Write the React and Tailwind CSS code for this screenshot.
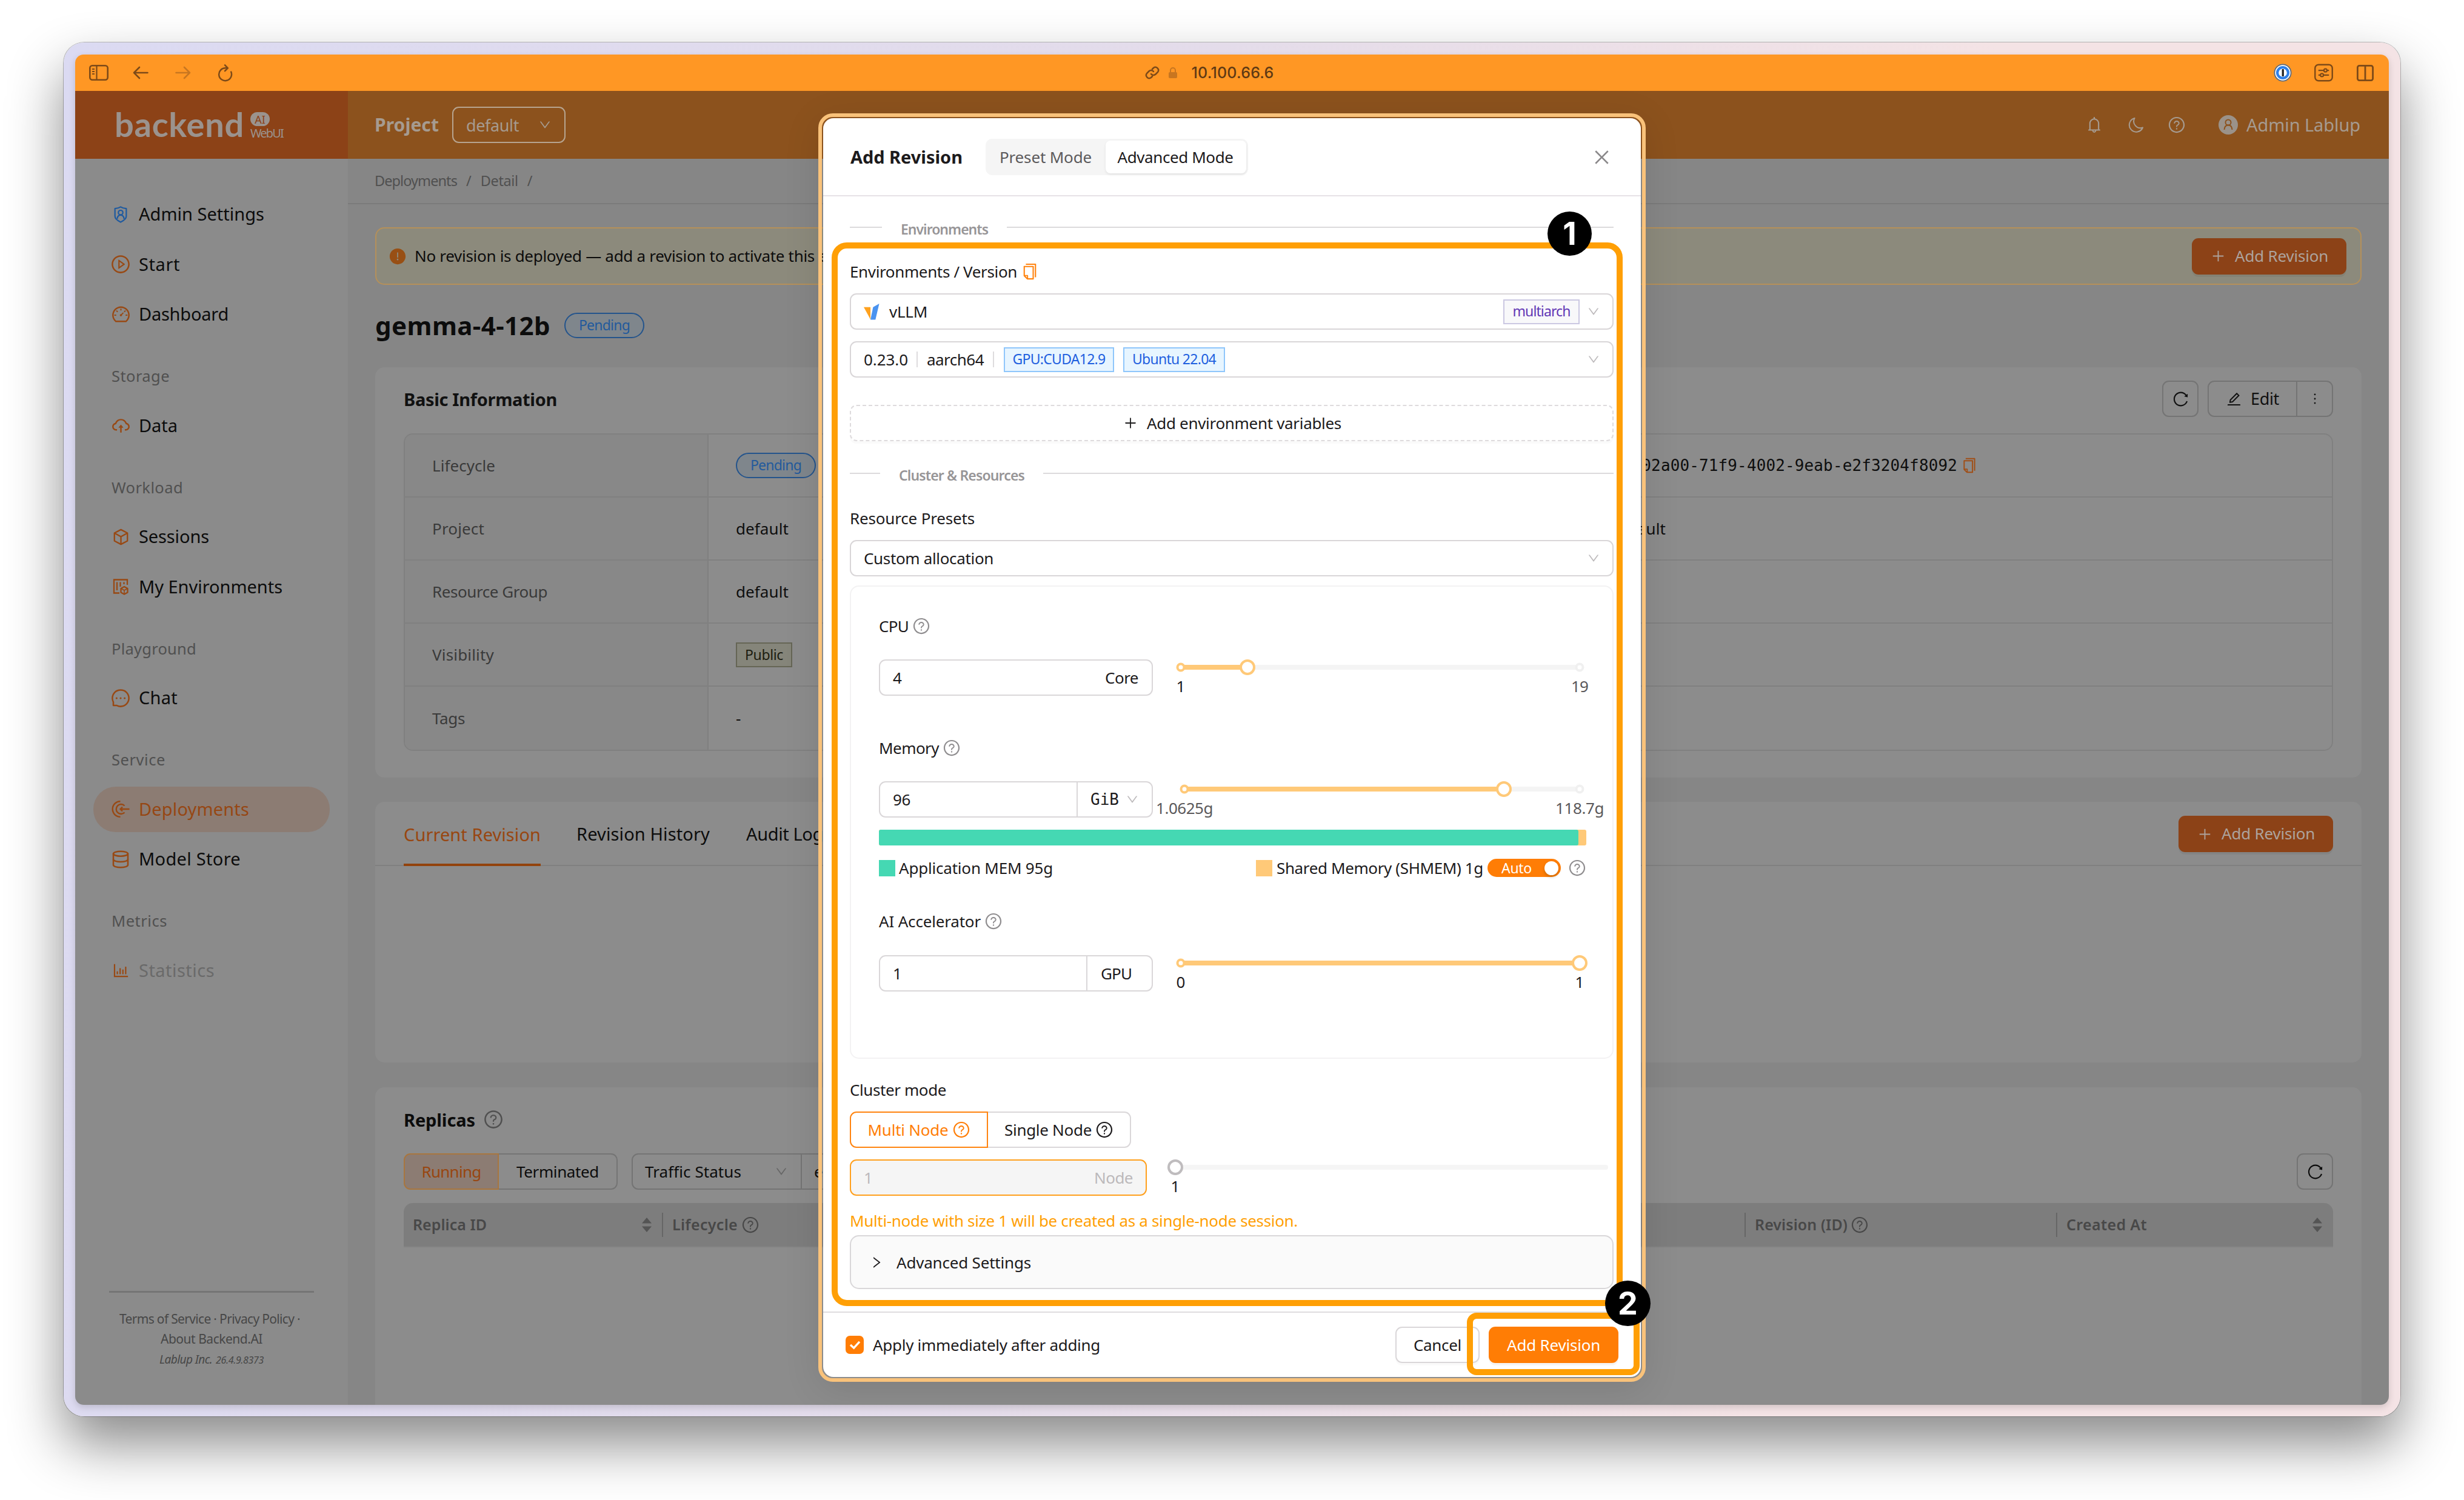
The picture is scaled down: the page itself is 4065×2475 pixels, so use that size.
import { useLayoutEffect, useRef } from "react";
import {
  AiFillExclamationCircle,
  AiOutlineBarChart,
  AiOutlineBell,
  AiOutlineClose,
  AiOutlineCloudUpload,
  AiOutlineCopy,
  AiOutlineDashboard,
  AiOutlineDown,
  AiOutlineEdit,
  AiOutlineMessage,
  AiOutlineMore,
  AiOutlinePlayCircle,
  AiOutlinePlus,
  AiOutlineQuestionCircle,
  AiOutlineReload,
  AiOutlineRight,
} from "react-icons/ai";
import { Database } from "lucide-react";
import clsx from "clsx";

/* Single-line label that spreads its letters to the given width. */
function Fit({ w, className, children }) {
  const ref = useRef(null);
  useLayoutEffect(() => {
    const el = ref.current;
    el.style.letterSpacing = "0px";
    const natural = el.getBoundingClientRect().width;
    el.style.letterSpacing = (w - natural) / el.textContent.length + "px";
  }, [w, children]);
  return (
    <span ref={ref} className={clsx("inline-block shrink-0 whitespace-pre leading-none", className)}>
      {children}
    </span>
  );
}

/* ---------- drawings ---------- */

function ShieldUser() {
  return (
    <svg viewBox="0 0 24 30" className="h-[28px] w-[24px]" fill="none" stroke="#1f5a9f" strokeWidth="2.4" strokeLinejoin="round">
      <path d="M12 1.5C9 3.5 6 4.200 2 4.500V18c0 5 5 8 10 10.500C17 26 22 23 22 18V4.500C18 4.200 15 3.500 12 1.500Z" />
      <circle cx="12" cy="11.500" r="4" />
      <path d="M6 22.500c.5-4.500 3-6.500 6-6.500s5.500 2 6 6.500" />
    </svg>
  );
}

function Cube() {
  return (
    <svg viewBox="0 0 28 30" className="h-[28px] w-[27px]" fill="none" stroke="currentColor" strokeWidth="2.500" strokeLinejoin="round">
      <path d="M14 2 25.500 8v14L14 28 2.500 22V8Z" />
      <path d="M2.500 8 14 14.500 25.500 8M14 14.500V28" />
    </svg>
  );
}

function EnvIcon() {
  return (
    <svg viewBox="0 0 28 28" className="h-[28px] w-[28px]" fill="none" stroke="currentColor" strokeWidth="2.300">
      <path d="M25 11V2.500H3V24.500H12" />
      <path d="M8 6.500V20M13.500 6.500V14M19.500 6.500V10" />
      <path d="M20 14 25.500 17v6.500L20 26.500 14.500 23.500V17Z" strokeLinejoin="round" />
      <path d="M14.500 17 20 20 25.500 17M20 20V26.500" strokeWidth="1.600" />
    </svg>
  );
}

function DeployIcon() {
  return (
    <svg viewBox="0 0 30 30" className="h-[30px] w-[30px]" fill="none" stroke="currentColor" strokeWidth="2.400">
      <path d="M14.500 2.200A12.800 12.800 0 0 0 14.500 27.800" />
      <path d="M21.500 9.500A8 8 0 1 0 21.500 20.500" />
      <path d="M29.500 15H14.500M18 11.500 14.500 15l3.500 3.500" />
    </svg>
  );
}

function Moon() {
  return (
    <svg viewBox="0 0 26 26" className="h-[26px] w-[26px]" fill="none" stroke="currentColor" strokeWidth="2" strokeLinejoin="round">
      <path d="M10.500 2A11.500 11.500 0 1 0 24 17.500 11 11 0 0 1 10.500 2Z" />
    </svg>
  );
}

function Avatar() {
  return (
    <svg viewBox="0 0 32 32" className="h-[32px] w-[32px]">
      <circle cx="16" cy="16" r="16" fill="#9b9289" />
      <g fill="none" stroke="#8c521d" strokeWidth="2">
        <circle cx="16" cy="12" r="4.500" />
        <path d="M9.500 24c.3-5 3-7.500 6.500-7.500s6.200 2.500 6.500 7.500" />
      </g>
    </svg>
  );
}

function Sorter() {
  return (
    <svg viewBox="0 0 16 24" className="h-[24px] w-[16px]" fill="#545454">
      <path d="M8 0 16 9.500H0ZM8 24 16 14.500H0Z" />
    </svg>
  );
}

function VllmMark() {
  return (
    <svg viewBox="0 0 27 28" className="h-[27px] w-[26px]">
      <path d="M0 6H11.500V27Z" fill="#ffa21f" />
      <path d="M16 6 26.500 0 20 27.500H11.500Z" fill="#4a93f0" />
    </svg>
  );
}

function Help({ className }) {
  return <AiOutlineQuestionCircle className={clsx("h-[30px] w-[30px] shrink-0", className)} />;
}

/* ---------- browser bar ---------- */

function BrowserBar() {
  return (
    <div className="grid h-[60px] shrink-0 grid-cols-3 items-center bg-[#ff9724] text-[#7d4a18]">
      <div className="flex items-center pl-[23px]">
        <svg viewBox="0 0 32 26" className="h-[26px] w-[32px]" fill="none" stroke="currentColor" strokeWidth="2.600">
          <rect x="1.300" y="1.300" width="29.400" height="23.400" rx="4" />
          <path d="M12.500 1.500V24.500M5 7h4M5 11h4M5 15h4" strokeWidth="2.200" />
        </svg>
        <svg viewBox="0 0 26 22" className="ml-[40px] h-[22px] w-[26px]" fill="none" stroke="currentColor" strokeWidth="2.600" strokeLinecap="round" strokeLinejoin="round">
          <path d="M24.500 11H2M11 2 2 11l9 9" />
        </svg>
        <svg viewBox="0 0 26 22" className="ml-[44px] h-[22px] w-[26px] text-[#c87620]" fill="none" stroke="currentColor" strokeWidth="2.600" strokeLinecap="round" strokeLinejoin="round">
          <path d="M1.500 11H24M15 2l9 9-9 9" />
        </svg>
        <svg viewBox="0 0 26 30" className="ml-[44px] h-[29px] w-[26px]" fill="none" stroke="currentColor" strokeWidth="2.600" strokeLinecap="round" strokeLinejoin="round">
          <path d="M22.500 13A10.800 10.800 0 1 1 13 6.500h3" />
          <path d="M12 1.500 17 6.500 12 11.500" />
        </svg>
      </div>
      <div className="flex items-center justify-center pr-[74px]">
        <svg viewBox="0 0 24 24" className="h-[24px] w-[24px]" fill="none" stroke="currentColor" strokeWidth="2.500" strokeLinecap="round">
          <path d="M10 14a5 5 0 0 0 7.500.5l3.500-3.500a5 5 0 0 0-7-7l-2 2" />
          <path d="M14 10a5 5 0 0 0-7.500-.5L3 13a5 5 0 0 0 7 7l2-2" />
        </svg>
        <svg viewBox="0 0 16 20" className="ml-[14px] h-[20px] w-[16px] text-[#c87620]">
          <rect x="1" y="9" width="14" height="10" rx="2" fill="currentColor" />
          <path d="M4 9V6a4 4 0 0 1 8 0v3" fill="none" stroke="currentColor" strokeWidth="2" />
        </svg>
        <Fit w={136} className="ml-[22px] font-[Inter,sans-serif] text-[25px] font-medium text-[#5f3a14]">10.100.66.6</Fit>
      </div>
      <div className="flex items-center justify-end pr-[25px]">
        <svg viewBox="0 0 32 32" className="h-[30px] w-[30px]">
          <circle cx="16" cy="16" r="14.500" fill="#fff" stroke="#5b6b80" strokeWidth="2" />
          <circle cx="16" cy="16" r="9.500" fill="#fff" stroke="#2f80ea" strokeWidth="4.500" />
          <rect x="14.500" y="9.500" width="3.500" height="13" rx="1" fill="#222" />
        </svg>
        <svg viewBox="0 0 32 30" className="ml-[37px] h-[30px] w-[31px]" fill="none" stroke="currentColor" strokeWidth="2.500">
          <rect x="1.300" y="1.300" width="29.400" height="27.400" rx="6" />
          <path d="M7 11h9M22 11h3M7 19h3M16 19h9" strokeWidth="2.200" />
          <circle cx="19" cy="11" r="2.600" strokeWidth="2.200" />
          <circle cx="13" cy="19" r="2.600" strokeWidth="2.200" />
        </svg>
        <svg viewBox="0 0 28 27" className="ml-[39px] h-[27px] w-[28px]" fill="none" stroke="currentColor" strokeWidth="2.800">
          <rect x="1.400" y="1.400" width="25.200" height="24.200" rx="3" />
          <path d="M14 1.400V25.600" />
        </svg>
      </div>
    </div>
  );
}

/* ---------- side menu ---------- */

function Item({ icon, w, active, muted, children, last }) {
  return (
    <div
      className={clsx(
        "mx-[30px] flex h-[75px] items-center rounded-[37px] text-[29px]",
        active ? "bg-[#8c7c73] text-[#964714]" : muted ? "text-[#6a6a6a]" : "text-[#0c0c0c]",
        !last && "mb-[7.500px]",
      )}
    >
      <span className="ml-[28px] flex w-[34px] justify-center text-[#984914]">{icon}</span>
      <Fit w={w} className="-mt-[2px] ml-[13px]">{children}</Fit>
    </div>
  );
}

function Group({ w, children }) {
  return (
    <div className="flex h-[108.500px] pl-[60px] pt-[52px] text-[25.500px] text-[#505050]">
      <Fit w={w}>{children}</Fit>
    </div>
  );
}

function Sider() {
  return (
    <div className="flex w-[450px] shrink-0 flex-col bg-[#8b8b8b]">
      <div className="flex h-[112px] shrink-0 items-center bg-[#8c4217] pl-[65px] text-[#9b938e]">
        <Fit w={214} className="-mt-[3px] font-[Lato,sans-serif] text-[56px] font-bold">backend</Fit>
        <div className="ml-[10px] mt-[3px] flex flex-col">
          <span className="flex h-[23px] w-[32px] items-center justify-center rounded-full bg-[#9b938e] text-[18px] leading-none text-[#8c4217]">AI</span>
          <Fit w={54} className="mt-[2px] text-[20px]">WebUI</Fit>
        </div>
      </div>
      <div className="pt-[54px]">
        <Item icon={<ShieldUser />} w={207}>Admin Settings</Item>
        <Item icon={<AiOutlinePlayCircle className="size-[34px]" />} w={68}>Start</Item>
        <Item last icon={<AiOutlineDashboard className="size-[33px]" />} w={148}>Dashboard</Item>
        <Group w={96}>Storage</Group>
        <Item last icon={<AiOutlineCloudUpload className="size-[33px]" />} w={64}>Data</Item>
        <Group w={118}>Workload</Group>
        <Item icon={<Cube />} w={116}>Sessions</Item>
        <Item last icon={<EnvIcon />} w={237}>My Environments</Item>
        <Group w={140}>Playground</Group>
        <Item last icon={<AiOutlineMessage className="size-[34px]" />} w={64}>Chat</Item>
        <Group w={89}>Service</Group>
        <Item active icon={<DeployIcon />} w={182}>Deployments</Item>
        <Item last icon={<Database className="size-[32px]" strokeWidth={1.900} />} w={168}>Model Store</Item>
        <Group w={92}>Metrics</Group>
        <Item muted last icon={<AiOutlineBarChart className="size-[31px]" />} w={125}>Statistics</Item>
      </div>
      <div className="mx-[56px] mt-auto flex h-[188px] flex-col items-center border-t-[3px] border-[#757575] text-[#474747]">
        <Fit w={298} className="mt-[33px] -ml-[6px] text-[21px]">Terms of Service · Privacy Policy ·</Fit>
        <Fit w={168} className="mt-[12px] text-[21px]">About Backend.AI</Fit>
        <div className="mt-[14px] flex items-baseline italic">
          <Fit w={87} className="text-[19px]">Lablup Inc.</Fit>
          <Fit w={79} className="ml-[6px] text-[16px]">26.4.9.8373</Fit>
        </div>
      </div>
    </div>
  );
}

/* ---------- page behind the dialog ---------- */

function PageHeader() {
  return (
    <div className="flex h-[112px] shrink-0 items-center bg-[#8c521d] pl-[44px] pr-[47px] text-[#a69b90]">
      <Fit w={106} className="text-[30px] font-bold">Project</Fit>
      <div className="ml-[22px] flex h-[60px] w-[187px] items-center rounded-[11px] border-2 border-[#b7a48f] pl-[21px]">
        <Fit w={87} className="text-[27px]">default</Fit>
        <AiOutlineDown className="ml-[32px] size-[22px]" />
      </div>
      <div className="ml-auto flex items-center">
        <AiOutlineBell className="size-[30px]" />
        <span className="ml-[41px]"><Moon /></span>
        <Help className="ml-[39px]" />
        <span className="ml-[54px]"><Avatar /></span>
        <Fit w={188} className="-mt-[2px] ml-[14px] text-[29px]">Admin Lablup</Fit>
      </div>
    </div>
  );
}

function DimButton() {
  return (
    <div className="flex h-[60px] w-[255px] items-center rounded-[11px] bg-[#8c4217] text-[#ada39d] shadow-[0_4px_0_rgba(0,0,0,0.05)]">
      <AiOutlinePlus className="ml-[31px] size-[25px]" />
      <Fit w={154} className="-mt-[2px] ml-[15px] text-[26px]">Add Revision</Fit>
    </div>
  );
}

function DimPill() {
  return (
    <div className="flex h-[42px] w-[132px] items-center justify-center rounded-full border-2 border-[#24548c] bg-[#7f868c] text-[#235a9c]">
      <Fit w={84} className="-mt-[1px] text-[23px]">Pending</Fit>
    </div>
  );
}

function InfoRow({ label, w, value, right, last }) {
  return (
    <div className={clsx("flex h-[104px]", !last && "border-b-2 border-[#808080]")}>
      <div className="flex w-[501px] shrink-0 items-center border-r-2 border-[#808080] bg-[#888] pl-[45px] text-[#3a3a3a]">
        <Fit w={w}>{label}</Fit>
      </div>
      <div className="flex w-[947px] shrink-0 items-center pl-[45px] text-[#0e0e0e]">{value}</div>
      <div className="w-[500px] shrink-0 border-x-2 border-[#808080] bg-[#888]" />
      <div className="flex items-center pl-[45px] text-[#0e0e0e]">{right}</div>
    </div>
  );
}

function Page() {
  return (
    <div className="flex min-w-0 flex-1 flex-col bg-[#868686]">
      <PageHeader />
      <div className="flex h-[75px] shrink-0 items-center gap-[15px] border-b-2 border-[#7b7b7b] pl-[44px] text-[23.500px] text-[#505050]">
        <Fit w={136}>Deployments</Fit>
        <span className="leading-none">/</span>
        <Fit w={62}>Detail</Fit>
        <span className="leading-none">/</span>
      </div>
      <div className="flex min-h-0 flex-1 flex-col pl-[45px] pr-[45px] pt-[38px]">
        <div className="flex h-[95px] shrink-0 items-center rounded-[15px] border-2 border-[#b5905a] bg-[#8c8a7c] pl-[20px] pr-[23px]">
          <AiFillExclamationCircle className="size-[30px] text-[#984f14]" />
          <Fit w={660} className="-mt-[2px] ml-[13px] text-[26px] text-[#0c0c0c]">No revision is deployed — add a revision to activate this</Fit>
          <Fit w={112} className="-mt-[2px] ml-[7px] text-[26px] text-[#0c0c0c]">endpoint.</Fit>
          <div className="ml-auto"><DimButton /></div>
        </div>
        <div className="mt-[38px] flex h-[60px] shrink-0 items-center">
          <Fit w={289} className="-mt-[3px] text-[42px] font-bold text-[#0c0c0c]">gemma-4-12b</Fit>
          <div className="-mt-[3px] ml-[23px]"><DimPill /></div>
        </div>

        <div className="mt-[38px] h-[677px] shrink-0 rounded-[15px] bg-[#8c8c8c] px-[47px] pt-[22px]">
          <div className="flex h-[60px] items-center text-[#111]">
            <Fit w={253} className="text-[29px] font-bold">Basic Information</Fit>
            <div className="ml-auto flex h-[60px] w-[60px] items-center justify-center rounded-[11px] border-2 border-[#747474]">
              <AiOutlineReload className="size-[29px]" />
            </div>
            <div className="ml-[15px] flex h-[60px] w-[207px] items-center rounded-[11px] border-2 border-[#747474]">
              <AiOutlineEdit className="ml-[28px] size-[27px]" />
              <Fit w={47} className="-mt-[1px] ml-[14px] text-[27px]">Edit</Fit>
              <div className="ml-auto flex h-full w-[59px] items-center justify-center border-l-2 border-[#747474]">
                <AiOutlineMore className="size-[26px]" />
              </div>
            </div>
          </div>
          <div className="mt-[27px] overflow-hidden rounded-[15px] border-2 border-[#808080] text-[26px]">
            <InfoRow
              label="Lifecycle"
              w={104}
              value={<DimPill />}
              right={
                <>
                  <Fit w={568} className="font-['DejaVu_Sans_Mono',monospace] text-[26px]">01902a00-71f9-4002-9eab-e2f3204f8092</Fit>
                  <AiOutlineCopy className="ml-[6px] size-[28px] text-[#a04e16]" />
                </>
              }
            />
            <InfoRow label="Project" w={86} value={<Fit w={87}>default</Fit>} right={<Fit w={87}>default</Fit>} />
            <InfoRow label="Resource Group" w={190} value={<Fit w={87}>default</Fit>} />
            <InfoRow
              label="Visibility"
              w={102}
              value={
                <div className="flex h-[41px] w-[93px] items-center justify-center border-2 border-[#656555] bg-[#85857a] text-[#1c1c10]">
                  <Fit w={63} className="text-[23px]">Public</Fit>
                </div>
              }
            />
            <InfoRow label="Tags" w={54} value="-" last />
          </div>
        </div>

        <div className="mt-[40px] h-[430px] shrink-0 rounded-[15px] bg-[#8c8c8c]">
          <div className="flex h-[106px] border-b-2 border-[#808080] px-[47px] text-[29px] text-[#0c0c0c]">
            <div className="-mb-[2px] flex items-center border-b-4 border-[#93430d] pt-[5px] text-[#984610]">
              <Fit w={226}>Current Revision</Fit>
            </div>
            <div className="ml-[59px] flex items-center pt-[1px]"><Fit w={220}>Revision History</Fit></div>
            <div className="ml-[60px] flex items-center pt-[1px]"><Fit w={127}>Audit Log</Fit></div>
            <div className="ml-auto pt-[23px]"><DimButton /></div>
          </div>
        </div>

        <div className="mt-[41px] flex-1 rounded-t-[15px] bg-[#8c8c8c] px-[47px] pt-[33px] text-[#0c0c0c]">
          <div className="flex h-[40px] items-center">
            <Fit w={118} className="text-[29px] font-bold">Replicas</Fit>
            <Help className="ml-[13px] h-[34px] w-[34px] text-[#505050]" />
          </div>
          <div className="mt-[36px] flex h-[60px] text-[26px]">
            <div className="flex w-[157px] items-center justify-center rounded-l-[11px] border-2 border-[#a8763f] bg-[#8c7c73] text-[#984610]">
              <Fit w={98}>Running</Fit>
            </div>
            <div className="flex w-[196px] items-center justify-center rounded-r-[11px] border-2 border-l-0 border-[#747474]">
              <Fit w={136}>Terminated</Fit>
            </div>
            <div className="ml-[23px] flex w-[281px] items-center rounded-l-[11px] border-2 border-[#747474] pl-[20px]">
              <Fit w={159}>Traffic Status</Fit>
              <AiOutlineDown className="ml-auto mr-[21px] size-[22px] text-[#666]" />
            </div>
            <div className="flex w-[400px] items-center rounded-r-[11px] border-2 border-l-0 border-[#747474] pl-[20px]">
              <Fit w={80}>equals</Fit>
            </div>
            <div className="ml-auto flex w-[60px] items-center justify-center rounded-[11px] border-2 border-[#747474]">
              <AiOutlineReload className="size-[29px]" />
            </div>
          </div>
          <div className="mt-[22px] flex h-[73px] items-center rounded-t-[15px] border-b-2 border-[#828282] bg-[#7d7d7d] text-[25px] font-semibold text-[#484848]">
            <div className="flex h-[40px] w-[428px] items-center border-r-2 border-[#666] pl-[15px] pr-[17px]">
              <Fit w={122}>Replica ID</Fit>
              <span className="ml-auto"><Sorter /></span>
            </div>
            <div className="flex h-[40px] w-[1786px] items-center border-r-2 border-[#666] pl-[15px]">
              <Fit w={108}>Lifecycle</Fit>
              <Help className="ml-[6px]" />
            </div>
            <div className="flex h-[40px] w-[514px] items-center border-r-2 border-[#666] pl-[15px]">
              <Fit w={153}>Revision (ID)</Fit>
              <Help className="ml-[5px]" />
            </div>
            <div className="flex h-[40px] flex-1 items-center pl-[15px] pr-[18px]">
              <Fit w={133}>Created At</Fit>
              <span className="ml-auto"><Sorter /></span>
            </div>
          </div>
        </div>
      </div>
    </div>
  );
}

/* ---------- dialog ---------- */

function Section({ line, w, children }) {
  return (
    <div className="flex h-[40px] items-center">
      <div className={clsx("mb-[5px] h-[2px] bg-[#dcdadc]", line)} />
      <Fit w={w} className="mx-[31px] mt-[2px] text-[23px] font-semibold text-[#979597]">{children}</Fit>
      <div className="mb-[5px] h-[2px] flex-1 bg-[#dcdadc]" />
    </div>
  );
}

function Label({ w, help, children }) {
  return (
    <div className="flex h-[40px] items-center">
      <Fit w={w}>{children}</Fit>
      {help && <Help className="ml-[6px] text-[#8f8d8f]" />}
    </div>
  );
}

function Select({ className, children }) {
  return (
    <div className={clsx("flex h-[60px] items-center rounded-[11px] border-2 border-[#d9d6d8] bg-white pl-[21px] pr-[20px]", className)}>
      {children}
      <AiOutlineDown className="size-[22px] shrink-0 text-[#bdbabc]" />
    </div>
  );
}

function Tag({ className, w, children }) {
  return (
    <div className={clsx("flex h-[41px] items-center justify-center border-2 text-[23px]", className)}>
      <Fit w={w} className="-mt-[2px]">{children}</Fit>
    </div>
  );
}

function Slider({ className, value, min, max, tone = "text-[#1c1a1c]", maxTone = "text-[#5a585a]" }) {
  return (
    <div className={clsx("relative mt-[9px] h-[7.500px] rounded-full bg-[#f4f4f4]", className)}>
      <div className="h-full rounded-full bg-[#ffc978]" style={{ width: `${value}%` }} />
      <span className="absolute left-0 top-1/2 size-[15px] -translate-x-1/2 -translate-y-1/2 rounded-full border-4 border-[#ffc978] bg-white" />
      <span className="absolute left-full top-1/2 size-[15px] -translate-x-1/2 -translate-y-1/2 rounded-full border-4 border-[#f0f0f0] bg-white" />
      <span
        className="absolute top-1/2 size-[26px] -translate-x-1/2 -translate-y-1/2 rounded-full border-4 border-[#ffc978] bg-white"
        style={{ left: `${value}%` }}
      />
      <span className={clsx("absolute left-0 top-[22px] -translate-x-1/2 leading-none", tone)}>{min}</span>
      <span className={clsx("absolute left-full top-[22px] -translate-x-1/2 leading-none", maxTone)}>{max}</span>
    </div>
  );
}

function Badge({ className, children }) {
  return (
    <div className={clsx("absolute flex items-center justify-center rounded-full bg-black font-[Inter,sans-serif] text-[52px] font-bold leading-none text-white", className)}>
      {children}
    </div>
  );
}

function Resources() {
  const box = "flex h-[60px] w-[452px] shrink-0 items-center rounded-[11px] border-2 border-[#dad7d9] pl-[21px]";
  return (
    <div className="mt-[15px] h-[781px] rounded-[15px] border-2 border-[#f3f2f3] pl-[46px] pr-[44px] pt-[45px]">
      <Label w={49} help>CPU</Label>
      <div className="mt-[35px] flex">
        <div className={box}>
          <span className="leading-none">4</span>
          <Fit w={55} className="ml-auto mr-[22px]">Core</Fit>
        </div>
        <Slider className="ml-[46px] w-[658px]" value={16.700} min="1" max={<Fit w={28}>19</Fit>} />
      </div>

      <div className="mt-[66px]"><Label w={99} help>Memory</Label></div>
      <div className="mt-[35px] flex">
        <div className={box}>
          <Fit w={29}>96</Fit>
          <div className="ml-auto flex h-full w-[124px] items-center border-l-2 border-[#dad7d9] pl-[21px]">
            <Fit w={47} className="font-['DejaVu_Sans_Mono',monospace]">GiB</Fit>
            <AiOutlineDown className="ml-[11px] size-[22px] text-[#bdbabc]" />
          </div>
        </div>
        <Slider className="ml-[52px] w-[652px]" value={80.800} min={<Fit w={94}>1.0625g</Fit>} max={<Fit w={80}>118.7g</Fit>} tone="text-[#5a585a]" />
      </div>
      <div className="mt-[20px] flex h-[26px] w-[1167px] overflow-hidden rounded-[3px] bg-[#ffc978]">
        <div className="w-[1154px] rounded-r-[3px] bg-[#45d8b3]" />
      </div>
      <div className="mt-[17px] flex h-[40px] w-[1167px] items-center">
        <span className="size-[27px] bg-[#45d8b3]" />
        <Fit w={254} className="ml-[6px]">Application MEM 95g</Fit>
        <span className="ml-auto size-[27px] bg-[#ffc978]" />
        <Fit w={341} className="ml-[7px]">Shared Memory (SHMEM) 1g</Fit>
        <div className="ml-[7px] flex h-[30px] w-[121px] items-center rounded-full bg-[#ff7d05] pl-[23px] pr-[4px] text-white">
          <Fit w={50} className="text-[23px]">Auto</Fit>
          <span className="ml-auto size-[23px] rounded-full bg-white shadow-[0_3px_5px_rgba(0,35,11,0.2)]" />
        </div>
        <Help className="ml-[12px] text-[#8f8d8f]" />
      </div>

      <div className="mt-[48px]"><Label w={168} help>AI Accelerator</Label></div>
      <div className="mt-[36px] flex">
        <div className={box}>
          <span className="leading-none">1</span>
          <div className="ml-auto flex h-full w-[108px] items-center border-l-2 border-[#dad7d9] pl-[22px]">
            <Fit w={51}>GPU</Fit>
          </div>
        </div>
        <Slider className="ml-[46px] w-[658px]" value={100} min="0" max="1" maxTone="text-[#1c1a1c]" />
      </div>
    </div>
  );
}

function Dialog() {
  return (
    <div className="absolute left-[1226px] top-[97px] h-[2093px] w-[1365px] rounded-[24px] border-[6px] border-[#f9c27a] p-[2px] shadow-[0_12px_60px_rgba(0,0,0,0.1)]">
      <div className="relative flex h-full flex-col rounded-[17px] bg-white text-[26px] text-[#1c1a1c]">
        <div className="flex h-[129px] shrink-0 items-center border-b-2 border-[#e6e2e6] pl-[45px] pr-[48px]">
          <Fit w={185} className="text-[29px] font-bold">Add Revision</Fit>
          <div className="ml-[38px] flex h-[60px] w-[433px] items-center rounded-[11px] bg-[#f5f5f5] p-[3px]">
            <Fit w={152} className="ml-[20px] text-[#5c5a5c]">Preset Mode</Fit>
            <div className="ml-auto flex h-[54px] w-[232px] items-center justify-center rounded-[8px] bg-white pr-[2px] shadow-[0_2px_4px_rgba(0,0,0,0.08)]">
              <Fit w={191}>Advanced Mode</Fit>
            </div>
          </div>
          <AiOutlineClose className="ml-auto mt-[1px] size-[33px] text-[#8a888a]" />
        </div>

        <div className="flex flex-1 flex-col pl-[44px] pr-[45px] pt-[33px]">
          <Section line="w-[53px]" w={144}>Environments</Section>
          <div className="mt-[31px] flex h-[40px] items-center">
            <Fit w={276}>Environments / Version</Fit>
            <AiOutlineCopy className="ml-[6px] size-[30px] text-[#ff8410]" />
          </div>
          <Select className="mt-[16px]">
            <VllmMark />
            <Fit w={63} className="ml-[16px]">vLLM</Fit>
            <Tag w={95} className="ml-auto mr-[12px] w-[126px] border-[#cbc8e2] bg-[#f8f8fa] text-[#6237b5]">multiarch</Tag>
          </Select>
          <Select className="mt-[19px]">
            <Fit w={73}>0.23.0</Fit>
            <span className="ml-[14px] h-[26px] w-[2px] bg-[#dedcde]" />
            <Fit w={94} className="ml-[15px]">aarch64</Fit>
            <span className="ml-[15px] h-[26px] w-[2px] bg-[#dedcde]" />
            <Tag w={153} className="ml-[16px] w-[182px] border-[#8fc6fb] bg-[#e7f5ff] text-[#1f60df]">GPU:CUDA12.9</Tag>
            <Tag w={138} className="ml-[15px] mr-auto w-[168px] border-[#8fc6fb] bg-[#e7f5ff] text-[#1f60df]">Ubuntu 22.04</Tag>
          </Select>
          <div className="mt-[45px] flex h-[60px] items-center justify-center rounded-[11px] border-2 border-dashed border-[#dedbdd] pl-[2px] shadow-[0_4px_0_rgba(0,0,0,0.02)]">
            <AiOutlinePlus className="size-[24px]" />
            <Fit w={321} className="ml-[15px]">Add environment variables</Fit>
          </div>
          <div className="mt-[35px]"><Section line="w-[50px]" w={207}>{"Cluster & Resources"}</Section></div>
          <div className="mt-[32px]"><Label w={206}>Resource Presets</Label></div>
          <Select className="mt-[16px]">
            <Fit w={214} className="mr-auto">Custom allocation</Fit>
          </Select>
          <Resources />
          <div className="mt-[31px]"><Label w={159}>Cluster mode</Label></div>
          <div className="mt-[16px] flex h-[60px]">
            <div className="flex w-[228px] items-center justify-center rounded-l-[11px] border-2 border-[#ff8410] text-[#ff7d05]">
              <Fit w={133}>Multi Node</Fit>
              <Help className="ml-[6px]" />
            </div>
            <div className="flex w-[236px] items-center justify-center rounded-r-[11px] border-2 border-l-0 border-[#dad7d9]">
              <Fit w={144}>Single Node</Fit>
              <Help className="ml-[6px]" />
            </div>
          </div>
          <div className="mt-[19px] flex">
            <div className="flex h-[60px] w-[490px] items-center rounded-[11px] border-2 border-[#ffa01e] bg-[#f5f5f5] px-[21px] text-[#bcb9bb]">
              <span className="leading-none">1</span>
              <Fit w={64} className="ml-auto">Node</Fit>
            </div>
            <div className="relative ml-[47px] mt-[9px] h-[7.500px] w-[714px] rounded-full bg-[#f5f5f5]">
              <span className="absolute left-0 top-1/2 size-[26px] -translate-x-1/2 -translate-y-1/2 rounded-full border-4 border-[#bfbcbe] bg-white" />
              <span className="absolute left-0 top-[22px] -translate-x-1/2 leading-none">1</span>
            </div>
          </div>
          <div className="mt-[21px] flex h-[40px] items-center text-[#ff9f05]">
            <Fit w={739}>Multi-node with size 1 will be created as a single-node session.</Fit>
          </div>
          <div className="mt-[4px] flex h-[89px] items-center rounded-[15px] border-2 border-[#d9d7d9] bg-[#fafafa] pl-[30px]">
            <AiOutlineRight className="size-[24px]" />
            <Fit w={222} className="ml-[21px]">Advanced Settings</Fit>
          </div>
        </div>

        <div className="flex h-[108px] shrink-0 items-center border-t-2 border-[#dfdddf] pl-[37px] pr-[37px]">
          <span className="flex size-[30px] items-center justify-center rounded-[7px] bg-[#ff7d05]">
            <svg viewBox="0 0 20 16" className="h-[15px] w-[19px]" fill="none" stroke="#fff" strokeWidth="3.600">
              <path d="M2 7.500 8 13 18 2" />
            </svg>
          </span>
          <Fit w={375} className="ml-[15px]">Apply immediately after adding</Fit>
          <div className="ml-auto flex h-[60px] w-[139px] items-center justify-center rounded-[11px] border-2 border-[#dad7d9] shadow-[0_4px_0_rgba(0,0,0,0.02)]">
            <Fit w={79}>Cancel</Fit>
          </div>
          <div className="ml-[15px] flex h-[60px] w-[214px] items-center justify-center rounded-[11px] bg-[#ff7d05] text-white shadow-[0_4px_0_rgba(0,0,0,0.04)]">
            <Fit w={154}>Add Revision</Fit>
          </div>
        </div>

        <div className="absolute left-[14px] top-[205px] h-[1755px] w-[1305px] rounded-[25px] border-[10px] border-[#ff9f05]" />
        <div className="absolute left-[1062px] top-[1971px] h-[103px] w-[285px] rounded-[16px] border-[10px] border-[#ff9f05]" />
        <Badge className="left-[1195px] top-[154px] size-[73px]">1</Badge>
        <Badge className="left-[1290px] top-[1918px] size-[75px]">2</Badge>
      </div>
    </div>
  );
}

export default function App() {
  return (
    <div className="h-[2475px] w-[4065px] overflow-hidden bg-white pl-[105px] pt-[70px] font-['Noto_Sans',sans-serif]">
      <div className="h-[2267px] w-[3855px] rounded-[34px] bg-[linear-gradient(100deg,#dbdaf2_0%,#e4dcea_45%,#f4e3e5_75%)] px-[19px] pb-[19px] pt-[20px] shadow-[0_0_0_1px_rgba(0,0,0,0.25),0_46px_90px_rgba(0,0,0,0.46)]">
        <div className="relative flex h-[2228px] w-[3817px] flex-col overflow-hidden rounded-[14px] shadow-[0_4px_12px_rgba(0,0,0,0.15)]">
          <BrowserBar />
          <div className="flex min-h-0 flex-1">
            <Sider />
            <Page />
          </div>
          <Dialog />
        </div>
      </div>
    </div>
  );
}
